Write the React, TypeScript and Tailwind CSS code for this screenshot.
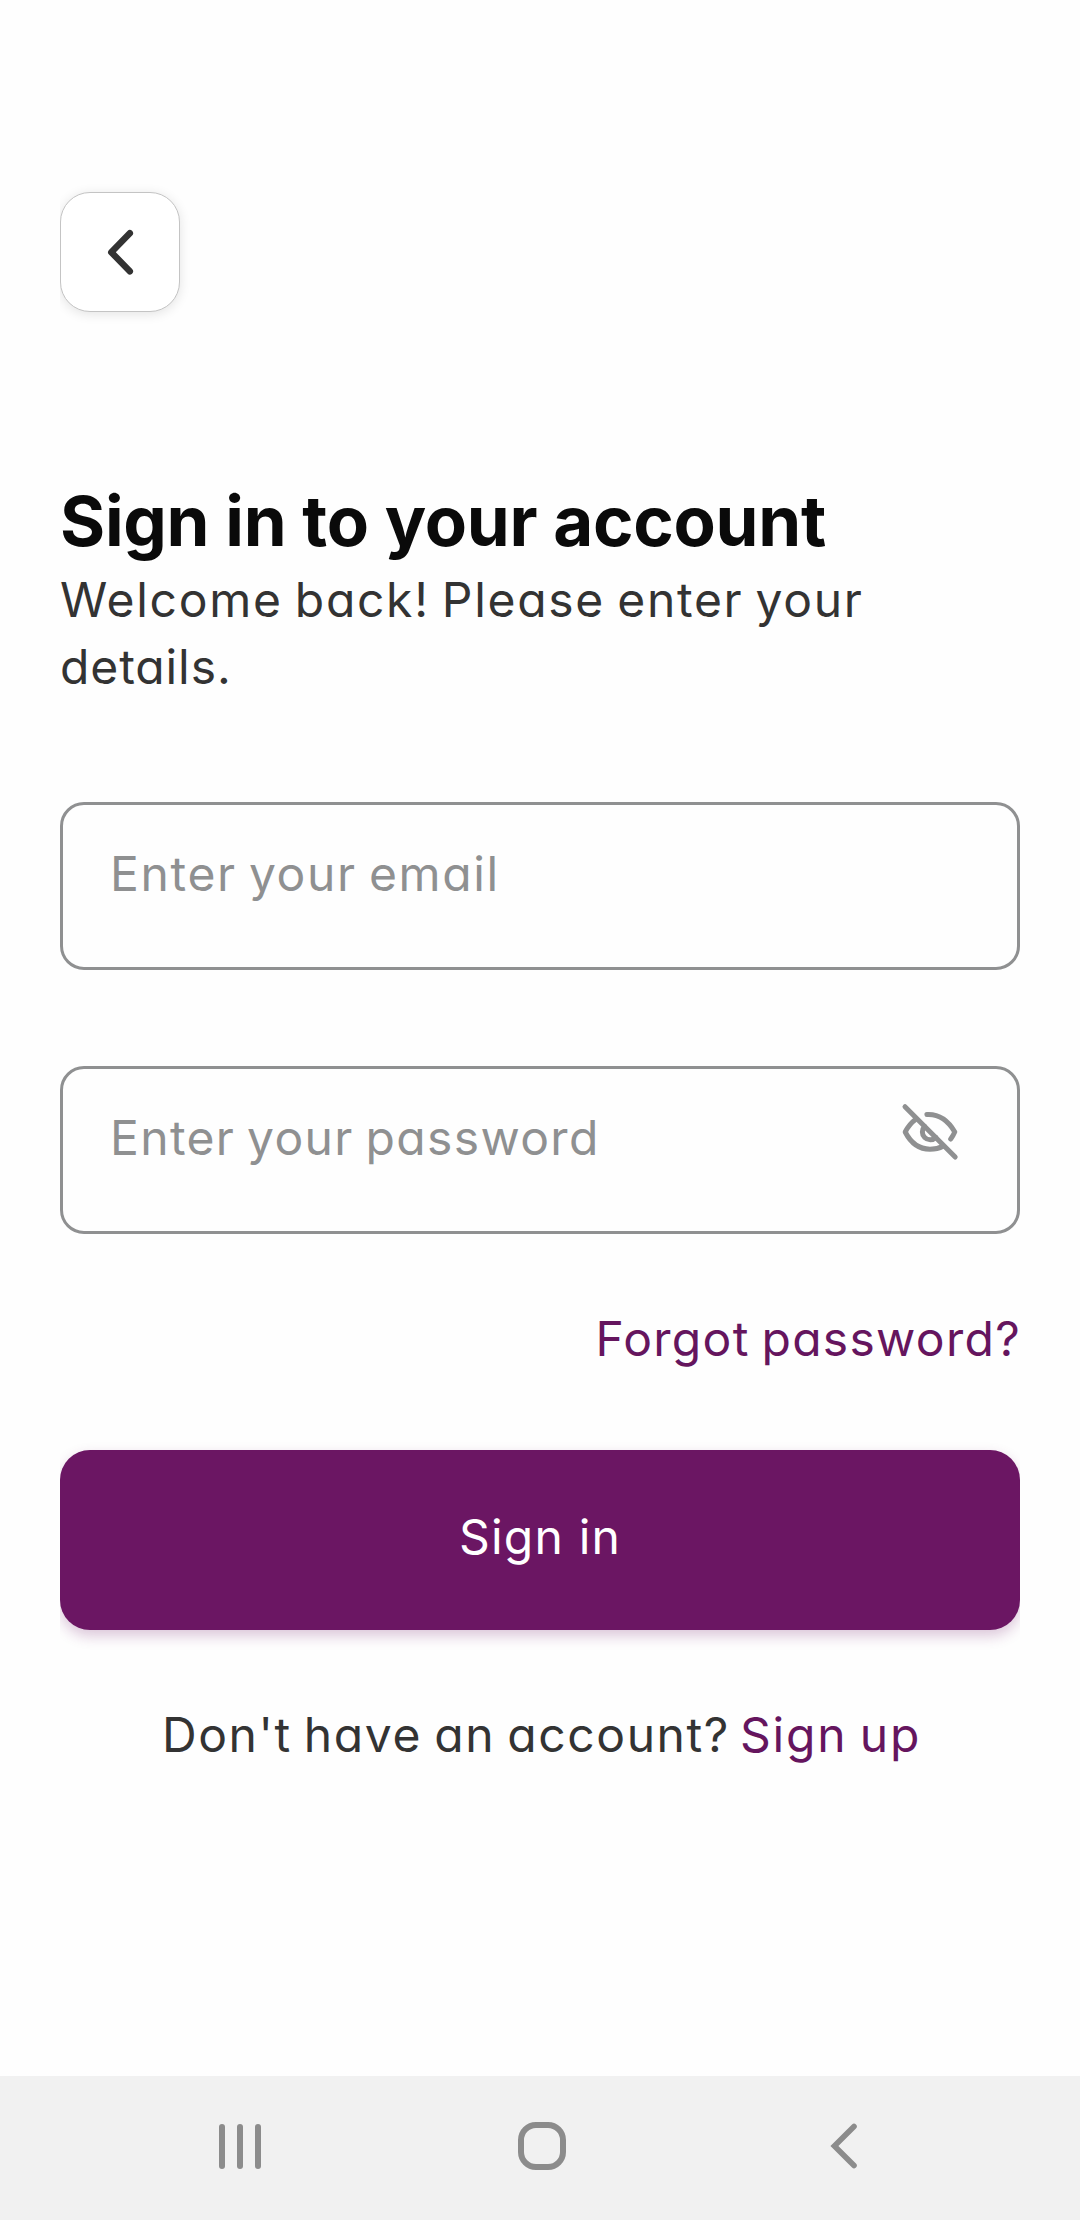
import type { ReactNode } from "react";

function BackButton() {
  return (
    <div className="w-[120px] [clip-path:inset(-40px_-40px_-40px_0)]">
      <button
        aria-label="Back"
        className="flex h-[120px] w-[120px] items-center justify-center rounded-[30px] border border-[#c4c4c4] bg-white shadow-[0_2px_12px_rgba(0,0,0,0.11)]"
      >
        <svg className="h-[60px] w-[60px]" viewBox="0 0 60 60" fill="none" stroke="#333333" strokeWidth="6.5" strokeLinecap="round" strokeLinejoin="round">
          <path d="M39.8 11.2 L21.3 30.2 L39.8 49.3" />
        </svg>
      </button>
    </div>
  );
}

function EyeOffIcon() {
  return (
    <svg className="-mt-1.5 h-[60px] w-[60px]" viewBox="0 0 60 60" fill="none" stroke="#8f9091" strokeWidth="5" strokeLinecap="round" strokeLinejoin="round">
      <path d="M5 4.7 L55.2 55" />
      <path d="M26.9 12.5 Q44 11.5 54.8 29.9 Q53.3 33.5 50.7 37" />
      <path d="M15.5 17.5 Q9.3 22 5.2 30 Q14 47.2 30 47.2 Q37.5 47.2 43 44.3" />
      <path d="M24.6 24.4 A7.8 7.8 0 0 0 35.8 35.4" />
    </svg>
  );
}

function Field({ children, icon, spacing }: { children: ReactNode; icon?: ReactNode; spacing: string }) {
  return (
    <div className="flex h-[168px] items-start justify-between rounded-[24px] border-3 border-[#8f9091] pt-[39px] pr-[57px] pl-[47px]">
      <span className={`text-[#8f9091] ${spacing}`}>{children}</span>
      {icon}
    </div>
  );
}

function NavigationBar() {
  return (
    <nav className="flex h-[144px] items-center justify-between bg-[#f1f1f1] pr-[222px] pb-1 pl-[219px]">
      <div className="flex h-[45px] w-[42px] justify-between">
        <span className="w-1.5 rounded-full bg-[#8c8c8c]" />
        <span className="w-1.5 rounded-full bg-[#8c8c8c]" />
        <span className="w-1.5 rounded-full bg-[#8c8c8c]" />
      </div>
      <div className="-ml-[7px] h-12 w-12 rounded-[18px] border-6 border-[#8c8c8c]" />
      <svg className="h-12 w-[28px]" viewBox="0 0 28 48" fill="none" stroke="#8c8c8c" strokeWidth="5.6" strokeLinecap="round" strokeLinejoin="miter">
        <path d="M24 4.5 L4.4 24 L24 43.6" />
      </svg>
    </nav>
  );
}

export default function App() {
  return (
    <div className="flex h-[2220px] w-[1080px] flex-col bg-[#fefefe] font-['Inter',sans-serif] text-[48px] leading-[60px] text-[#333333] [word-spacing:-3px]">
      <main className="flex grow flex-col px-[60px] pt-[192px] [font-feature-settings:'cv11']">
        <BackButton />

        <h1 className="mt-[169px] text-[69px] leading-[80px] font-bold tracking-[-0.3px] whitespace-nowrap text-[#0a0a0a] [font-feature-settings:normal] [word-spacing:0]">
          Sign in to your account
        </h1>
        <p className="mt-[5px] leading-[67px] tracking-[1.7px]">
          Welcome back! Please enter your
          <br />
          <span className="tracking-[0.9px]">details.</span>
        </p>

        <div className="mt-[102px] flex flex-col gap-24">
          <Field spacing="tracking-[1.65px]">Enter your email</Field>
          <Field spacing="tracking-[1.35px]" icon={<EyeOffIcon />}>
            Enter your password
          </Field>
        </div>

        <a className="mt-[75px] -mr-px self-end tracking-[1.3px] text-[#65155e]">Forgot password?</a>

        <div className="mt-[81px] [clip-path:inset(-40px_0_-40px_0)]">
          <button className="flex h-[180px] w-full items-center justify-center rounded-[30px] bg-[#6b1663] pb-[7px] tracking-[1.2px] text-white shadow-[0_6px_14px_rgba(107,22,99,0.24)]">
            Sign in
          </button>
        </div>

        <p className="mt-[75px] flex justify-center gap-[10px] pl-[3px] whitespace-nowrap">
          <span className="tracking-[1.6px]">Don't have an account?</span>
          <a className="tracking-[1.8px] text-[#65155e]">Sign up</a>
        </p>
      </main>
      <NavigationBar />
    </div>
  );
}
